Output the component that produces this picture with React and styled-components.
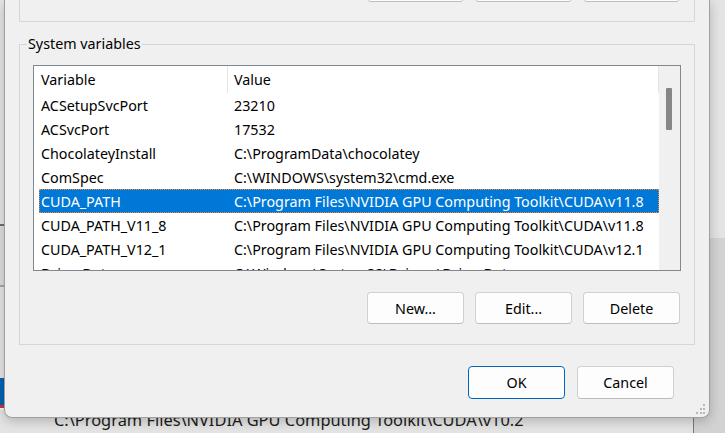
import React from "react";
import styled, { createGlobalStyle } from "styled-components";

const UI_FONT = `"Noto Sans", "Open Sans", "Liberation Sans", sans-serif`;

const GlobalStyle = createGlobalStyle`
  html, body { margin: 0; padding: 0; }
  body {
    width: 725px; height: 433px; overflow: hidden; background: #e9e9e9;
    font-family: ${UI_FONT};
  }
  * { box-sizing: border-box; }
`;

const Screen = styled.div`
  position: relative;
  width: 725px;
  height: 433px;
  overflow: hidden;
  display: grid;
  grid-template-rows: 410px 23px;
  background: #e9e9e9;
`;

const BackArea = styled.div`
  display: grid;
  grid-template-columns: 5px 1fr 15px;
`;

const Strip = styled.div`
  display: flex;
  flex-direction: column;
`;

const Band = styled.div`
  flex: ${(p) => (p.$h ? `0 0 ${p.$h}px` : "1 1 auto")};
  background: ${(p) => p.$c};
`;

const StatusRow = styled.div`
  display: grid;
  grid-template-columns: 693px 1px 1fr;
  background: #e4e4e4;
`;

const StatusPath = styled.div`
  padding-left: 54px;
  font-size: 16.4px;
  line-height: 19px;
  color: #1b1b1b;
  white-space: nowrap;
  overflow: hidden;
`;

const StatusDivider = styled.div`
  background: #7a7a7a;
`;

const StatusEnd = styled.div`
  background: #d2d2d2;
`;

const Dialog = styled.div`
  position: absolute;
  left: 4px;
  top: 0;
  width: 706px;
  display: flex;
  flex-direction: column;
  padding: 0 14px 18px;
  background: #f0f0f0;
  border: 1px solid #a0a0a0;
  border-top: 0;
  border-radius: 0 0 8px 8px;
  box-shadow: 0 3px 12px rgba(0, 0, 0, 0.22);
  font-family: ${UI_FONT};
  font-size: 14.3px;
  color: #000;
`;

const TopGroup = styled.div`
  margin-top: -30px;
  padding: 0 13px 19px;
  border: 1px solid #d6d6d6;
  border-top: 0;
`;

const Group = styled.fieldset`
  margin: 13px 0 0;
  padding: 12px 13px 20px;
  border: 1px solid #d6d6d6;
  min-width: 0;
`;

const Legend = styled.legend`
  margin-left: -6px;
  padding: 0 1px;
  line-height: 18px;
  font-size: 14.3px;
`;

const ListBox = styled.div`
  height: 206px;
  border: 1px solid #828790;
  background: #fff;
  display: grid;
  grid-template-columns: 1fr 21px;
  overflow: hidden;
`;

const ListBody = styled.div`
  display: flex;
  flex-direction: column;
  min-width: 0;
  overflow: hidden;
`;

const Header = styled.div`
  display: grid;
  grid-template-columns: 194px 1fr;
  height: 27px;
  flex-shrink: 0;
`;

const HeaderCell = styled.div`
  padding: 1px 0 0 ${(p) => p.$pad}px;
  line-height: 26px;
  border-right: 1px solid #e5e5e5;
  white-space: nowrap;
`;

const Row = styled.div`
  display: grid;
  grid-template-columns: 187px 1fr;
  height: 24px;
  padding-top: 1px;
  line-height: 21px;
  margin-left: 5px;
  flex-shrink: 0;
  border: 1px ${(p) => (p.$selected ? "dotted #ff8728" : "solid transparent")};
  background: ${(p) => (p.$selected ? "#0078d7" : "transparent")};
  color: ${(p) => (p.$selected ? "#fff" : "#000")};
`;

const Cell = styled.div`
  padding-left: ${(p) => p.$pad}px;
  white-space: nowrap;
  overflow: hidden;
`;

const ScrollTrack = styled.div`
  background: #f0f0f0;
  padding: 22px 0 0 7px;
`;

const Thumb = styled.div`
  width: 6px;
  height: 42px;
  background: #868686;
  border-radius: 1px;
`;

const ButtonRow = styled.div`
  display: flex;
  justify-content: flex-end;
  gap: ${(p) => p.$gap}px;
  padding-right: ${(p) => p.$inset}px;
  margin-top: ${(p) => p.$top}px;
`;

const Button = styled.button`
  width: 97px;
  height: ${(p) => p.$h}px;
  padding: 0;
  border-radius: 4px;
  background: #fdfdfd;
  border: 1px solid ${(p) => (p.$default ? "#0067c0" : "#d0d0d0")};
  border-bottom-color: ${(p) => (p.$default ? "#0067c0" : "#bdbdbd")};
  font-family: ${UI_FONT};
  font-size: 14.3px;
  color: #000;
`;

const Grip = styled.svg`
  position: absolute;
  right: 4px;
  bottom: 3px;
`;

const rows = [
  ["ACSetupSvcPort", "23210"],
  ["ACSvcPort", "17532"],
  ["ChocolateyInstall", "C:\\ProgramData\\chocolatey"],
  ["ComSpec", "C:\\WINDOWS\\system32\\cmd.exe"],
  ["CUDA_PATH", "C:\\Program Files\\NVIDIA GPU Computing Toolkit\\CUDA\\v11.8", true],
  ["CUDA_PATH_V11_8", "C:\\Program Files\\NVIDIA GPU Computing Toolkit\\CUDA\\v11.8"],
  ["CUDA_PATH_V12_1", "C:\\Program Files\\NVIDIA GPU Computing Toolkit\\CUDA\\v12.1"],
  ["DriverData", "C:\\Windows\\System32\\Drivers\\DriverData"],
];

function GroupButtons({ top }) {
  return (
    <ButtonRow $gap={11} $inset={1} $top={top}>
      <Button $h={32}>New...</Button>
      <Button $h={32}>Edit...</Button>
      <Button $h={32}>Delete</Button>
    </ButtonRow>
  );
}

export default function App() {
  return (
    <>
      <GlobalStyle />
      <Screen>
        <BackArea>
          <Strip>
            <Band $h={224} $c="#e6e6e6" />
            <Band $h={2} $c="#6e6e6e" />
            <Band $h={59} $c="#dedede" />
            <Band $h={2} $c="#a8a8a8" />
            <Band $h={91} $c="#e6e6e6" />
            <Band $h={27} $c="#0063b1" />
            <Band $h={3} $c="#d13438" />
            <Band $c="#f7f7f7" />
          </Strip>
          <div />
          <Strip>
            <Band $h={238} $c="#e4e4e4" />
            <Band $c="#d3d3d3" />
          </Strip>
        </BackArea>
        <StatusRow>
          <StatusPath>C:\Program Files\NVIDIA GPU Computing Toolkit\CUDA\v10.2</StatusPath>
          <StatusDivider />
          <StatusEnd />
        </StatusRow>

        <Dialog>
          <TopGroup>
            <GroupButtons top={0} />
          </TopGroup>
          <Group>
            <Legend>System variables</Legend>
            <ListBox>
              <ListBody>
                <Header>
                  <HeaderCell $pad={7}>Variable</HeaderCell>
                  <HeaderCell $pad={6}>Value</HeaderCell>
                </Header>
                {rows.map(([name, value, sel]) => (
                  <Row key={name} $selected={!!sel}>
                    <Cell $pad={1}>{name}</Cell>
                    <Cell $pad={7}>{value}</Cell>
                  </Row>
                ))}
              </ListBody>
              <ScrollTrack>
                <Thumb />
              </ScrollTrack>
            </ListBox>
            <GroupButtons top={21} />
          </Group>
          <ButtonRow $gap={12} $inset={21} $top={21}>
            <Button $h={33} $default>OK</Button>
            <Button $h={33}>Cancel</Button>
          </ButtonRow>
          <Grip width="10" height="10" viewBox="0 0 10 10">
            <rect x="8" y="0" width="2" height="2" fill="#b8b8b8" />
            <rect x="5" y="4" width="2" height="2" fill="#b8b8b8" />
            <rect x="8" y="4" width="2" height="2" fill="#b8b8b8" />
            <rect x="1" y="8" width="2" height="2" fill="#b8b8b8" />
            <rect x="5" y="8" width="2" height="2" fill="#b8b8b8" />
            <rect x="8" y="8" width="2" height="2" fill="#b8b8b8" />
          </Grip>
        </Dialog>
      </Screen>
    </>
  );
}
